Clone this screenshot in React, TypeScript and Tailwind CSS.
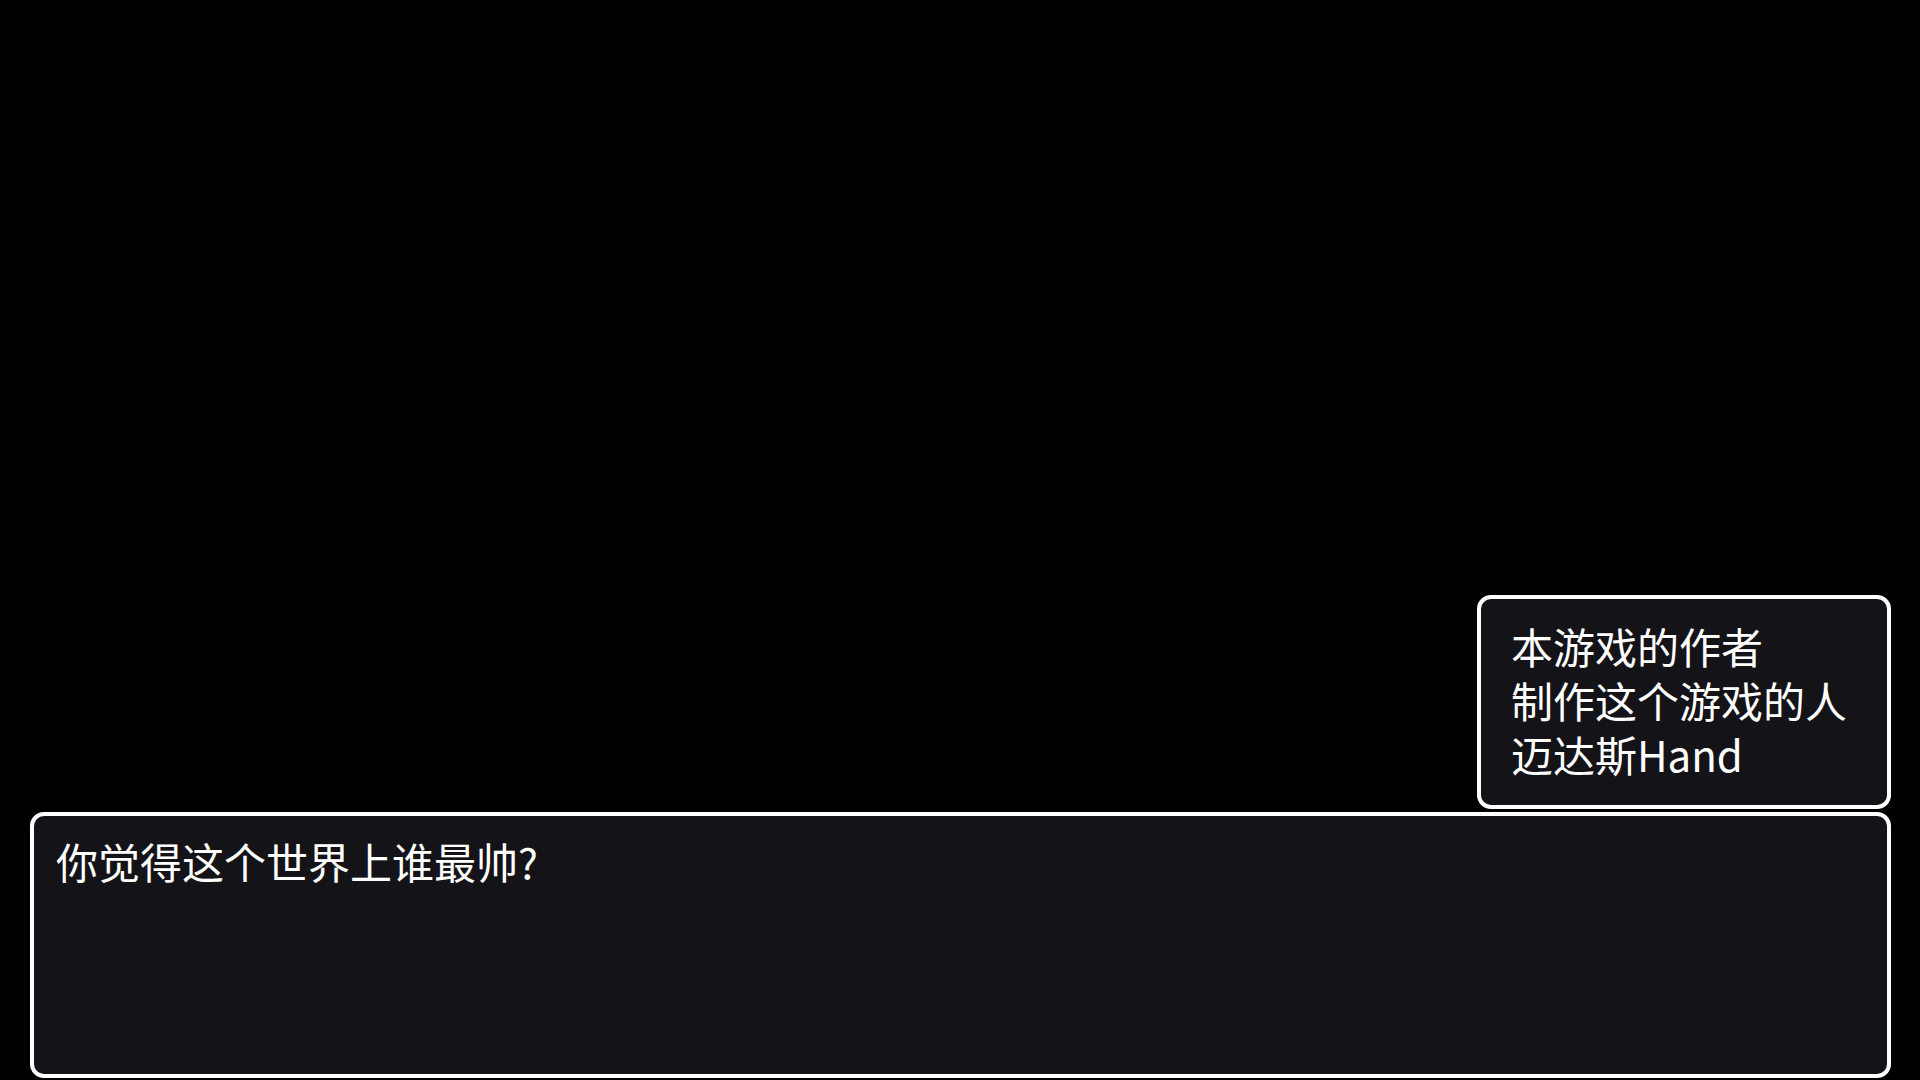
export default function App() {
  const font = { fontFamily: '"Noto Sans CJK SC", "Noto Sans", sans-serif' };

  return (
    <main className="w-full h-screen bg-black flex flex-col justify-end items-end gap-[3px] pl-[30px] pr-[29px] pb-[2px]" style={font}>
      {/* speaker box */}
      <div className="w-[414px] h-[214px] rounded-[14px] border-[4px] border-white bg-[#141317] pl-[30px] pt-[20px]">
        <div className="text-white text-[42px] leading-[54px]">
          <p>本游戏的作者</p>
          <p>制作这个游戏的人</p>
          <p>迈达斯Hand</p>
        </div>
      </div>

      {/* message box */}
      <div className="w-full h-[266px] rounded-[14px] border-[4px] border-white bg-[#141317] pl-[22px] pt-[18px]">
        <p className="text-white text-[42px] leading-[54px]">你觉得这个世界上谁最帅?</p>
      </div>
    </main>
  );
}
